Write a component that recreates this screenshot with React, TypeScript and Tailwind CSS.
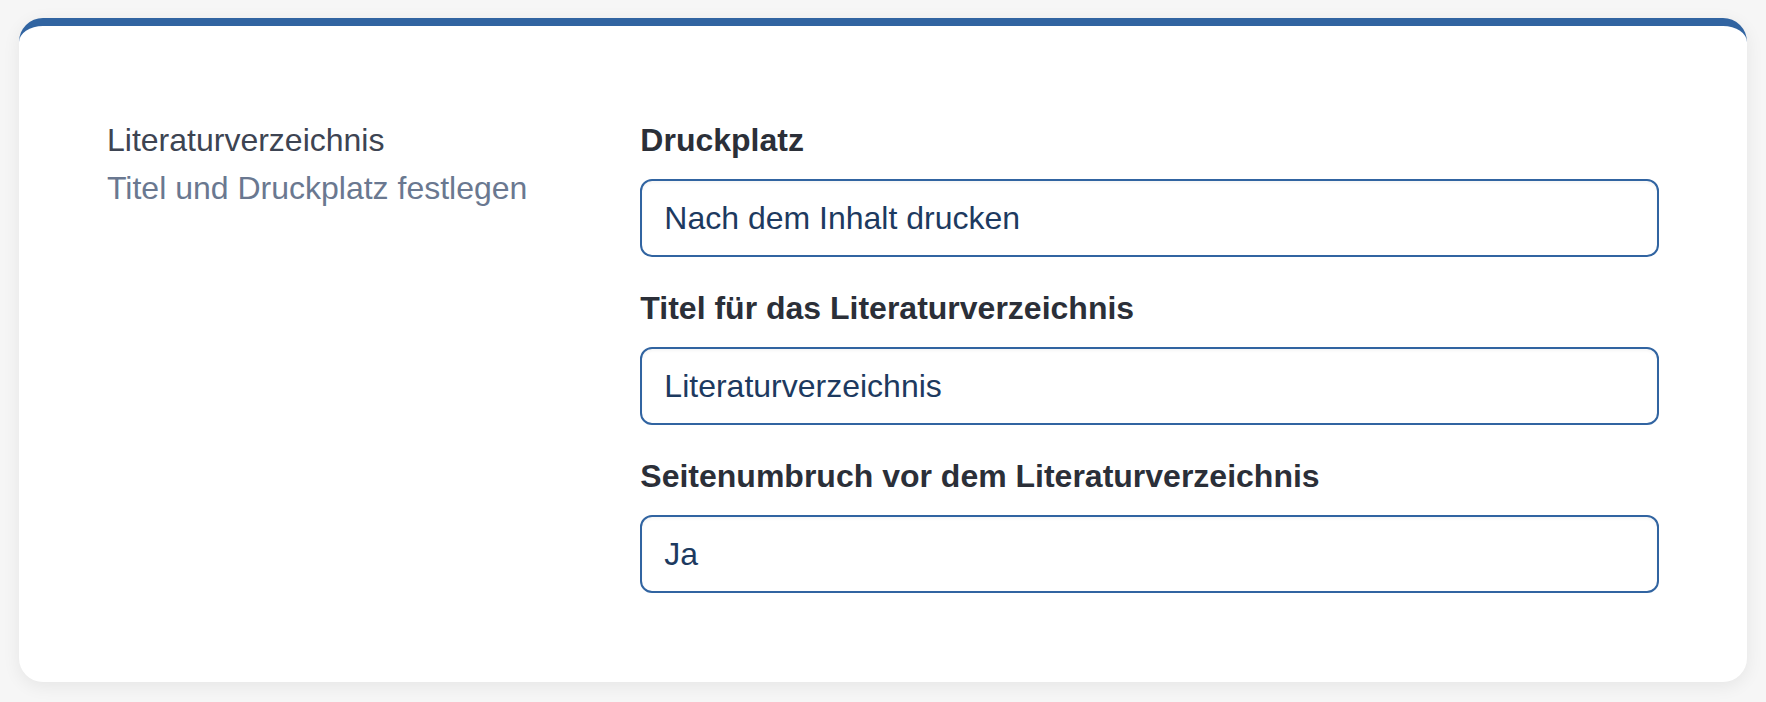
import React from "react";

const fields = [
  { label: "Druckplatz", value: "Nach dem Inhalt drucken" },
  { label: "Titel für das Literaturverzeichnis", value: "Literaturverzeichnis" },
  { label: "Seitenumbruch vor dem Literaturverzeichnis", value: "Ja" },
];

export default function App() {
  return (
    <div className="min-h-[702px] w-full bg-[#f6f6f6] px-[19px] pt-[18px] pb-[20px] font-['Liberation_Sans',Arial,Helvetica,sans-serif]">
      <div className="rounded-[24px] border-t-[8px] border-[#3164a1] bg-white px-[88px] pt-[90px] pb-[89px] shadow-[0_4px_18px_rgba(0,0,0,0.07)]">
        <div className="grid grid-cols-3 gap-x-[48px]">
          <div className="flex flex-col">
            <div className="text-[32px] leading-[48px] text-[#3d4452]">Literaturverzeichnis</div>
            <div className="text-[32px] leading-[48px] text-[#6a7890]">Titel und Druckplatz festlegen</div>
          </div>
          <div className="col-span-2 flex flex-col gap-[27px]">
            {fields.map((f) => (
              <div key={f.label} className="flex flex-col gap-[15px]">
                <div className="text-[32px] font-bold leading-[48px] text-[#2b2f38]">{f.label}</div>
                <div className="flex h-[78px] items-center rounded-[12px] border-2 border-[#3164a1] bg-white px-[22px] text-[32px] leading-[48px] text-[#1d3a60] shadow-[inset_0_2px_3px_rgba(0,0,0,0.04)]">
                  {f.value}
                </div>
              </div>
            ))}
          </div>
        </div>
      </div>
    </div>
  );
}
